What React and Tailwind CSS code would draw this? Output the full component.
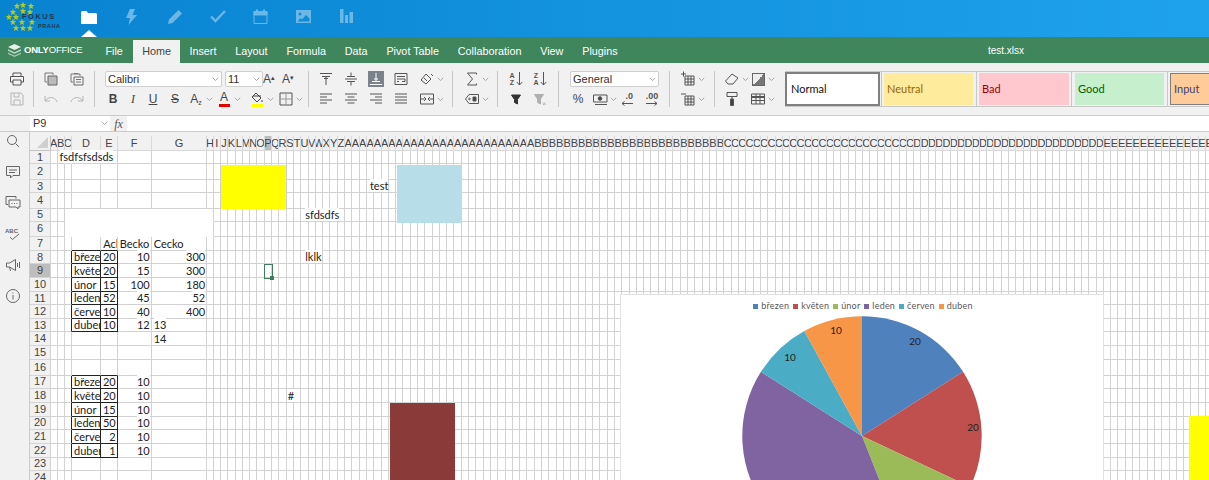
import React from "react";

const colName = (i) => {
  const a = "ABCDEFGHIJKLMNOPQRSTUVWXYZ";
  return i < 26 ? a[i] : a[Math.floor(i / 26) - 1] + a[i % 26];
};

const colWidths = [6.5, 7.2, 7.3, 29.2, 16.5, 34, 55.5, 6.5];
for (let i = 0; i < 138; i++) colWidths.push(7.3);

const rowLines = [151, 164.4, 180, 193.4, 208.7, 222.3, 236.7, 250.7, 264.4, 278.3, 292, 305.4, 318.8, 332.4, 346, 360, 375.7, 389.4, 403, 416.7, 430.4, 444, 457.7, 471.4, 485];
const rowHeights = rowLines.slice(1).map((y, i) => y - rowLines[i]);

const cells = {
  B1: { t: "fsdfsfsdsds", cls: "pl-[2px]" },
  U5: { t: "sfdsdfs", cls: "pl-[4px]" },
  AD3: { t: "test", cls: "pl-[3px]" },
  E7: { t: "Ack", clip: true, cls: "pl-[2px]" },
  F7: { t: "Becko", cls: "pl-[2px]" },
  G7: { t: "Cecko", cls: "pl-[2px]" },
  U8: { t: "lklk", cls: "pl-[4px]" },
  G13: { t: "13", cls: "pl-[2px]" },
  G14: { t: "14", cls: "pl-[2px]" },
  S18: { t: "#", cls: "pl-[1px]" },
};
const fill = (row, d, e, f, g) => {
  cells["D" + row] = { t: d, clip: true, cls: "pl-[2px]" };
  cells["E" + row] = { t: e, clip: true, cls: "text-right pr-[1px]" };
  cells["F" + row] = { t: f, cls: "text-right pr-[1px]" };
  if (g) cells["G" + row] = { t: g, cls: "text-right pr-[1px]" };
};
fill(8, "březen", "20", "10", "300");
fill(9, "květen", "20", "15", "300");
fill(10, "únor", "15", "100", "180");
fill(11, "leden", "52", "45", "52");
fill(12, "červen", "10", "40", "400");
fill(13, "duben", "10", "12");
fill(17, "březen", "20", "10");
fill(18, "květen", "20", "10");
fill(19, "únor", "15", "10");
fill(20, "leden", "50", "10");
fill(21, "červen", "2", "10");
fill(22, "duben", "1", "10");

const inTable = (r) => (r >= 8 && r <= 13) || (r >= 17 && r <= 22);

function cellBorders(c, r) {
  const name = colName(c);
  const blank = r >= 5 && r <= 6 && c >= 2 && c <= 7;
  let right = "border-r-[#d2d2d2]";
  let bottom = "border-b-[#d2d2d2]";
  if (r === 1 && c >= 1 && c <= 3) right = "border-r-transparent";
  if (blank && c < 7) right = "border-r-transparent";
  if (blank) bottom = "border-b-transparent";
  if (inTable(r) && (name === "C" || name === "D" || name === "E")) right = "border-r-[#222]";
  if ((inTable(r) || inTable(r + 1)) && (name === "D" || name === "E")) bottom = "border-b-[#222]";
  return right + " " + bottom;
}

function Sheet() {
  const rows = rowHeights.map((_, i) => i + 1);
  return (
    <div
      className="grid font-['Lato',sans-serif] text-[11px] leading-[13px] text-[#222]"
      style={{
        gridTemplateColumns: "21px " + colWidths.map((w) => w + "px").join(" "),
        gridTemplateRows: "15px " + rowHeights.map((h) => h + "px").join(" "),
      }}
    >
      <div className="bg-[#f1f1f1] border-r border-b border-[#c4c4c4] flex items-end justify-end pr-[2px] pb-[2px]">
        <svg width="11" height="11" viewBox="0 0 11 11"><path d="M11 0v11H0z" fill="#cfcfcf" /></svg>
      </div>
      {colWidths.map((_, c) => {
        const name = colName(c);
        return (
          <div
            key={name}
            className={
              "border-r border-b border-[#d9d9d9] overflow-hidden flex items-center justify-center font-['Liberation_Sans',sans-serif] text-[11px] text-[#444] " +
              (name === "P" ? "bg-[#bdbdbd]" : "bg-[#f1f1f1]")
            }
          >
            {name[0]}
          </div>
        );
      })}
      {rows.map((r) => (
        <React.Fragment key={r}>
          <div
            className={
              "border-r border-b border-[#d4d4d4] flex items-center justify-center font-['Liberation_Sans',sans-serif] text-[11px] text-[#444] " +
              (r === 9 ? "bg-[#bdbdbd]" : "bg-[#f1f1f1]")
            }
          >
            {r}
          </div>
          {colWidths.map((_, c) => {
            const id = colName(c) + r;
            const cell = cells[id];
            return (
              <div
                key={id}
                className={
                  "border-r border-b whitespace-nowrap flex flex-col justify-end min-w-0 " +
                  cellBorders(c, r) +
                  (cell && cell.clip ? " overflow-hidden" : "")
                }
              >
                {cell && (
                  <div className={"relative z-[1] " + cell.cls}>
                    <span className="bg-white">{cell.t}</span>
                  </div>
                )}
              </div>
            );
          })}
        </React.Fragment>
      ))}
    </div>
  );
}

const legend = [
  ["březen", "bg-[#4f81bd]"],
  ["květen", "bg-[#c0504d]"],
  ["únor", "bg-[#9bbb59]"],
  ["leden", "bg-[#8064a2]"],
  ["červen", "bg-[#4bacc6]"],
  ["duben", "bg-[#f79646]"],
];

const slices = [
  [20, "#4f81bd"],
  [20, "#c0504d"],
  [15, "#9bbb59"],
  [50, "#8064a2"],
  [10, "#4bacc6"],
  [10, "#f79646"],
];

function Pie() {
  const cx = 120, cy = 120, rad = 119.7;
  let acc = 0;
  return (
    <svg width="240" height="240" viewBox="0 0 240 240">
      {slices.map(([v, color]) => {
        const a0 = (acc / 125) * Math.PI * 2;
        acc += v;
        const a1 = (acc / 125) * Math.PI * 2;
        const large = a1 - a0 > Math.PI ? 1 : 0;
        const d = `M${cx} ${cy}L${cx + rad * Math.sin(a0)} ${cy - rad * Math.cos(a0)}A${rad} ${rad} 0 ${large} 1 ${cx + rad * Math.sin(a1)} ${cy - rad * Math.cos(a1)}Z`;
        return <path key={color} d={d} fill={color} />;
      })}
      <g fontFamily="Lato, sans-serif" fontSize="10" fill="#222" textAnchor="middle">
        <text x="173" y="29">20</text>
        <text x="231" y="115">20</text>
        <text x="48" y="45">10</text>
        <text x="94" y="18">10</text>
      </g>
    </svg>
  );
}

function Chart() {
  return (
    <div className="absolute left-[590px] top-[158px] w-[484px] h-[400px] bg-white border border-[#e2e2e2]">
      <div className="flex justify-center gap-[4px] pt-[1px] pl-[2px] h-[21px] font-['Lato',sans-serif] text-[9px] leading-[12px] tracking-[0.2px] text-[#595959]">
        {legend.map(([name, color]) => (
          <div key={name} className="flex items-center gap-[3px]">
            <span className={"w-[5px] h-[5px] " + color}></span>
            <span>{name}</span>
          </div>
        ))}
      </div>
      <div className="ml-[121px]"><Pie /></div>
    </div>
  );
}

const ic = {
  print: <><path d="M4 5V2h8v3M4 11H1.5V5.5h13V11H12" /><path d="M4 9h8v5H4z" /></>,
  save: <><path d="M2 2h10l2 2v10H2z" /><path d="M5 2v4h5V2M5 14V9h6v5" /></>,
  copy: <><path d="M2 2h8v2M2 2v9h2" stroke="#777" /><path d="M5 5h9v9H5z" fill="#bbb" stroke="#666" /></>,
  paste: <><path d="M2 3h9v2M2 3v8h2" stroke="#777" /><path d="M5 2.5h4" stroke="#777" /><path d="M5 6h9v8H5z" stroke="#666" /><path d="M7 8.5h5M7 11h5" stroke="#777" /></>,
  undo: <path d="M14 11c-1-4-6-6-10-3L2 10V5M2 10h5" />,
  redo: <path d="M2 11c1-4 6-6 10-3l2 2V5M14 10H9" />,
  vtop: <><path d="M2 2.5h12" /><path d="M4 5.5h8M8 5.5V14M6 7.5h4" /></>,
  vmid: <><path d="M2 8h12M4 5.5h8M4 10.5h8M8 1.5V5M8 11v3.5" /></>,
  vbot: <><path d="M2 13.5h12M4 10.5h8M8 2v8.5M6 8h4" /></>,
  wrap: <><path d="M2 2.5h12v11H2z" /><path d="M4 5.5h8M4 8h8v2.5H9M4 10.5h2" /></>,
  orient: <><path d="M2 9l5-6 5 5-5 5z" /><path d="M5 7l3 3" /><path d="M12 3l2 2" /></>,
  left: <path d="M2 3h12M2 6h7M2 9h12M2 12h7" />,
  center: <path d="M2 3h12M4.5 6h7M2 9h12M4.5 12h7" />,
  right: <path d="M2 3h12M7 6h7M2 9h12M7 12h7" />,
  just: <path d="M2 3h12M2 6h12M2 9h12M2 12h12" />,
  merge: <><path d="M1.5 3h13v10h-13z" /><path d="M1.5 8h4M10.5 8h4M5 6l2 2-2 2M11 6L9 8l2 2" /></>,
  sum: <path d="M12.5 3.5V2h-9l5 6-5 6h9v-1.5" />,
  tag: <><path d="M1.5 8L5 3.5h9.5v9H5z" /><path d="M9 6h3v4H9z" fill="#444" /><circle cx="5.5" cy="8" r=".8" /></>,
  filter: <path d="M3.5 4h9L9.5 8.5V13l-3-1.5v-3z" fill="#333" stroke="#333" />,
  filterx: <><path d="M2.5 3.5h9L8.5 8v5l-3-1.5V8z" fill="#b0b0b0" stroke="#b0b0b0" /><path d="M11 11.5l2.5 2.5M13.5 11.5L11 14" stroke="#b0b0b0" /></>,
  money: <><path d="M1.5 4H15v7H1.5z" /><path d="M3 13.5h12" /><circle cx="8" cy="7.5" r="1.8" fill="#444" /></>,
  cellsAdd: <><path d="M5 5h9v9H5zM8 5v9M11 5v9M5 8h9M5 11h9" /><path d="M1 3h5M3.5.5v5" /></>,
  cellsDel: <><path d="M5 5h9v9H5zM8 5v9M11 5v9M5 8h9M5 11h9" /><path d="M1 3h5" /></>,
  eraser: <><path d="M1.5 10L8 3l6 4-5 6H4z" /></>,
  painter: <><path d="M3 1.5h10v4H3z" /><path d="M8 5.5V8" /><path d="M6.5 8h3v6.5h-3z" fill="#444" /></>,
  table: <><path d="M1.5 3h13v10h-13z" /><path d="M1.5 6h13" strokeWidth="2" /><path d="M1.5 9.5h13M6 3v10M10 3v10" /></>,
  border: <><path d="M2 2h12v12H2z" /><path d="M8 2v12M2 8h12" stroke="#999" /></>,
};

function Ic({ name, cls = "text-[#555]" }) {
  return (
    <svg width="16" height="16" viewBox="0 0 16 16" fill="none" stroke="currentColor" strokeWidth="1" className={cls}>
      {ic[name]}
    </svg>
  );
}

function Chev() {
  return (
    <svg width="7" height="5" viewBox="0 0 7 5" fill="none" stroke="#a8a8a8" className="ml-[2px]">
      <path d="M.8 .8L3.5 3.6 6.2 .8" />
    </svg>
  );
}

function Cell({ w, children, cls = "" }) {
  return <div className={"h-4 flex items-center justify-center shrink-0 " + w + " " + cls}>{children}</div>;
}

function Combo({ w, text, cls = "" }) {
  return (
    <div className={"h-4 bg-white border border-[#cfcfcf] rounded-[2px] flex items-center justify-between px-[2px] text-[11px] text-[#333] shrink-0 " + w + " " + cls}>
      <span>{text}</span>
      <Chev />
    </div>
  );
}

function Group({ w, children, cls = "" }) {
  return <div className={"h-9 flex flex-col justify-between shrink-0 border-r border-[#c8c8c8] " + w + " " + cls}>{children}</div>;
}

const Line = ({ children, cls = "" }) => <div className={"flex items-center " + cls}>{children}</div>;

function Letter({ children, cls = "" }) {
  return <span className={"text-[12px] leading-4 text-[#444] " + cls}>{children}</span>;
}

function StyleBox({ w, text, cls }) {
  return (
    <div className={"h-[32px] shrink-0 flex items-center pl-[3px] pt-[1px] font-['Lato',sans-serif] text-[11px] " + w + " " + cls}>
      {text}
    </div>
  );
}

function SortIcon({ top, bottom }) {
  return (
    <div className="flex items-center gap-[1px] text-[#555]">
      <span className="text-[7px] leading-[7px] font-bold text-center">{top}<br />{bottom}</span>
      <svg width="7" height="14" viewBox="0 0 7 14" fill="none" stroke="currentColor"><path d="M3.5 0v13M.8 10l2.7 3 2.7-3" /></svg>
    </div>
  );
}

function DecIcon({ text, left }) {
  return (
    <div className="flex flex-col items-end text-[#555]">
      <span className="text-[9px] leading-[9px] font-bold">{text}</span>
      <svg width="12" height="5" viewBox="0 0 12 5" fill="none" stroke="currentColor">
        <path d={left ? "M12 2.5H1M3.5 .5L1 2.5l2.5 2" : "M0 2.5h11M8.5 .5L11 2.5l-2.5 2"} />
      </svg>
    </div>
  );
}

function Toolbar() {
  return (
    <div className="h-[52px] bg-[#f1f1f1] flex items-start pt-2 overflow-hidden">
      <Group w="w-[34px]" cls="items-center">
        <Ic name="print" />
        <Ic name="save" cls="text-[#b5b5b5]" />
      </Group>
      <Group w="w-[61px]" cls="pl-[4px]">
        <Line>
          <Cell w="w-[26px]"><Ic name="copy" /></Cell>
          <Cell w="w-[26px]"><Ic name="paste" /></Cell>
        </Line>
        <Line>
          <Cell w="w-[26px]"><Ic name="undo" cls="text-[#b5b5b5]" /></Cell>
          <Cell w="w-[26px]"><Ic name="redo" cls="text-[#b5b5b5]" /></Cell>
        </Line>
      </Group>
      <Group w="w-[214px]" cls="pl-[10px]">
        <Line>
          <Combo w="w-[117px]" text="Calibri" />
          <Combo w="w-[38px]" text="11" cls="ml-[3px]" />
          <Cell w="w-[16px]" cls="ml-[-2px]"><Letter>A<sup className="text-[7px]">▴</sup></Letter></Cell>
          <Cell w="w-[16px]" cls="ml-[3px]"><Letter cls="text-[11px]">A<sup className="text-[7px]">▾</sup></Letter></Cell>
        </Line>
        <Line>
          <Cell w="w-[16px]"><Letter cls="font-bold">B</Letter></Cell>
          <Cell w="w-[16px]" cls="ml-[4px]"><Letter cls="italic font-['Liberation_Serif',serif]">I</Letter></Cell>
          <Cell w="w-[16px]" cls="ml-[4px]"><Letter cls="underline">U</Letter></Cell>
          <Cell w="w-[16px]" cls="ml-[6px]"><Letter cls="line-through">S</Letter></Cell>
          <Cell w="w-[16px]" cls="ml-[5px]"><Letter>A<sub className="text-[7px]">z</sub></Letter></Cell>
          <Chev />
          <Cell w="w-[16px]" cls="ml-[3px] flex-col"><Letter cls="leading-[13px]">A</Letter><span className="w-[11px] h-[3px] bg-[#e60000]"></span></Cell>
          <Chev />
          <Cell w="w-[16px]" cls="ml-[8px] flex-col">
            <svg width="14" height="12" viewBox="0 0 14 12" fill="none" stroke="#444"><path d="M6 1l5 5-4 4-5-5zM3 4h8M12 8v2" /></svg>
            <span className="w-[11px] h-[3px] bg-[#ffff00]"></span>
          </Cell>
          <Chev />
          <Cell w="w-[16px]" cls="ml-[4px]"><Ic name="border" /></Cell>
          <Chev />
        </Line>
      </Group>
      <Group w="w-[144px]" cls="pl-[9px]">
        <Line>
          <Cell w="w-[16px]"><Ic name="vtop" /></Cell>
          <Cell w="w-[16px]" cls="ml-[9px]"><Ic name="vmid" /></Cell>
          <div className="w-4 h-4 ml-[9px] bg-[#7a828c] flex items-center justify-center"><Ic name="vbot" cls="text-white" /></div>
          <Cell w="w-[16px]" cls="ml-[9px]"><Ic name="wrap" /></Cell>
          <Cell w="w-[16px]" cls="ml-[10px]"><Ic name="orient" /></Cell>
          <Chev />
        </Line>
        <Line>
          <Cell w="w-[16px]"><Ic name="left" /></Cell>
          <Cell w="w-[16px]" cls="ml-[9px]"><Ic name="center" /></Cell>
          <Cell w="w-[16px]" cls="ml-[9px]"><Ic name="right" /></Cell>
          <Cell w="w-[16px]" cls="ml-[9px]"><Ic name="just" /></Cell>
          <Cell w="w-[16px]" cls="ml-[10px]"><Ic name="merge" /></Cell>
          <Chev />
        </Line>
      </Group>
      <Group w="w-[45px]" cls="pl-[11px]">
        <Line><Cell w="w-[16px]"><Ic name="sum" /></Cell><Chev /></Line>
        <Line><Cell w="w-[16px]"><Ic name="tag" /></Cell><Chev /></Line>
      </Group>
      <Group w="w-[61px]" cls="pl-[9px]">
        <Line>
          <Cell w="w-[18px]"><SortIcon top="A" bottom="Z" /></Cell>
          <Cell w="w-[18px]" cls="ml-[6px]"><SortIcon top="Z" bottom="A" /></Cell>
        </Line>
        <Line>
          <Cell w="w-[18px]"><Ic name="filter" /></Cell>
          <Cell w="w-[18px]" cls="ml-[6px]"><Ic name="filterx" cls="text-[#aaa]" /></Cell>
        </Line>
      </Group>
      <Group w="w-[111px]" cls="pl-[11px]">
        <Line><Combo w="w-[89px]" text="General" /></Line>
        <Line>
          <Cell w="w-[16px]"><span className="text-[12px] text-[#444]">%</span></Cell>
          <Cell w="w-[16px]" cls="ml-[6px]"><Ic name="money" /></Cell>
          <Chev />
          <Cell w="w-[18px]" cls="ml-[1px]"><DecIcon text=".0" left /></Cell>
          <Cell w="w-[18px]" cls="ml-[7px]"><DecIcon text=".00" /></Cell>
        </Line>
      </Group>
      <Group w="w-[45px]" cls="pl-[10px]">
        <Line><Cell w="w-[16px]"><Ic name="cellsAdd" /></Cell><Chev /></Line>
        <Line><Cell w="w-[16px]"><Ic name="cellsDel" /></Cell><Chev /></Line>
      </Group>
      <div className="h-9 w-[70px] shrink-0 flex flex-col justify-between pl-[9px]">
        <Line>
          <Cell w="w-[16px]"><Ic name="eraser" /></Cell><Chev />
          <Cell w="w-[16px]" cls="ml-[1px]"><span className="w-[13px] h-[13px] border border-[#666] bg-[linear-gradient(135deg,#eee_50%,#777_50%)]"></span></Cell><Chev />
        </Line>
        <Line>
          <Cell w="w-[16px]"><Ic name="painter" /></Cell>
          <Cell w="w-[16px]" cls="ml-[10px]"><Ic name="table" /></Cell><Chev />
        </Line>
      </div>
      <div className="h-[36px] flex items-center border-y border-[#c8c8c8]">
        <StyleBox w="w-[95px]" text="Normal" cls="bg-white border-2 border-[#808080] text-[#111] h-[34px] pl-[4px] text-[11.5px]" />
        <div className="w-px h-full bg-[#c8c8c8] ml-[1px]"></div>
        <StyleBox w="w-[89px]" text="Neutral" cls="bg-[#ffeb9c] text-[#9c6500] ml-[2px]" />
        <div className="w-px h-full bg-[#c8c8c8] ml-[3px]"></div>
        <StyleBox w="w-[90px]" text="Bad" cls="bg-[#ffc7ce] text-[#9c0006] ml-[2px]" />
        <div className="w-px h-full bg-[#c8c8c8] ml-[2px]"></div>
        <StyleBox w="w-[89px]" text="Good" cls="bg-[#c6efce] text-[#006100] ml-[3px]" />
        <div className="w-px h-full bg-[#c8c8c8] ml-[3px]"></div>
        <StyleBox w="w-[60px]" text="Input" cls="bg-[#ffcc99] text-[#3f3f76] border border-[#7f7f7f] ml-[2px]" />
      </div>
    </div>
  );
}

const tabs = ["File", "Home", "Insert", "Layout", "Formula", "Data", "Pivot Table", "Collaboration", "View", "Plugins"];

function Star({ x, y }) {
  return <path transform={`translate(${x} ${y})`} d="M0-3.2L.9-1 3.2-.9 1.4.6 2 3 0 1.7-2 3-1.4.6-3.2-.9-.9-1z" fill="#b4cc14" />;
}

function Logo() {
  const stars = [[17,6],[23,5],[31,6],[13,12],[23,11],[30,12],[9,17],[16,17],[13,22],[22,22],[32,22],[16,28],[23,28],[30,28]];
  return (
    <div className="relative w-[67px] h-[37px] shrink-0">
      <svg width="40" height="37" viewBox="0 0 40 37">
        {stars.map(([x, y]) => <Star key={x + "-" + y} x={x} y={y} />)}
      </svg>
      <span className="absolute left-[22px] top-[12px] text-[7.5px] leading-[9px] font-bold tracking-[1.5px] text-[#23364f]">FOKUS</span>
      <span className="absolute left-[38px] top-[23px] text-[5.5px] leading-[6px] font-bold tracking-[0.6px] text-[#23364f]">PRAHA</span>
    </div>
  );
}

function TopIcons() {
  const c = "text-[#6bb8e6]";
  return (
    <div className="flex items-center">
      <div className="relative w-[43px] h-[37px] flex justify-center pt-[11px]">
        <svg width="16" height="13" viewBox="0 0 16 13" fill="#fff"><path d="M0 1.5A1.5 1.5 0 0 1 1.5 0h4L7 2h7.5A1.5 1.5 0 0 1 16 3.5V13H0z" /></svg>
        <span className="absolute bottom-0 left-[13.5px] w-0 h-0 border-x-[8px] border-x-transparent border-b-[7px] border-b-white"></span>
      </div>
      <div className="w-[43px] h-[37px] flex justify-center pt-[9px]">
        <svg width="11" height="16" viewBox="0 0 11 16" fill="currentColor" className={c}><path d="M4 0L0 9h4l-1.5 7L11 6H6.5L9 0z" /></svg>
      </div>
      <div className="w-[43px] h-[37px] flex justify-center pt-[10px]">
        <svg width="14" height="14" viewBox="0 0 14 14" fill="currentColor" className={c}><path d="M10.5 0L14 3.5 4.5 13 0 14l1-4.5z" /></svg>
      </div>
      <div className="w-[43px] h-[37px] flex justify-center pt-[10px]">
        <svg width="16" height="13" viewBox="0 0 16 13" fill="none" stroke="currentColor" strokeWidth="2.4" className={c}><path d="M1 6.5L5.5 11 15 1" /></svg>
      </div>
      <div className="w-[43px] h-[37px] flex justify-center pt-[9px]">
        <svg width="15" height="15" viewBox="0 0 15 15" fill="none" stroke="currentColor" className={c}><path d="M1 2.5h13v12H1z" /><path d="M1 2.5h13V6H1z" fill="currentColor" /><path d="M4 .5v3M11 .5v3" strokeWidth="2" /></svg>
      </div>
      <div className="w-[43px] h-[37px] flex justify-center pt-[10px]">
        <svg width="15" height="13" viewBox="0 0 15 13" fill="currentColor" className={c}><path fillRule="evenodd" d="M0 0h15v13H0zM4 2.5a1.5 1.5 0 1 0 0 3 1.5 1.5 0 0 0 0-3zM1.5 11.5h12v-3L10 5 6 9.5 4.5 8z" /></svg>
      </div>
      <div className="w-[43px] h-[37px] flex justify-center pt-[9px]">
        <svg width="14" height="14" viewBox="0 0 14 14" fill="currentColor" className={c}><path d="M0 0h3.5v14H0zM5 6h3v8H5zM9.5 3H13v11H9.5z" /></svg>
      </div>
    </div>
  );
}

const sideIcons = [
  <><circle cx="7" cy="7" r="4.5" /><path d="M10.5 10.5L14 14" /></>,
  <><path d="M1.5 2.5h13v9H8l-2.5 2.5v-2.5h-4z" /><path d="M4 6h8M4 8.5h6" /></>,
  <><path d="M1 1.5h10v2M1 1.5v8h2" /><path d="M4 5h11v7h-2v2l-2-2H4z" /><path d="M6.5 8.5h1M9 8.5h1M11.5 8.5h1" /></>,
  <><text x="0" y="7" fontSize="6" fontWeight="700" fill="currentColor" stroke="none" fontFamily="Liberation Sans, sans-serif">ABC</text><path d="M5 11l2.5 2.5L14 8" /></>,
  <><path d="M1.5 6h3l6-3.5v11l-6-3.5h-3zM4.5 10l1 4" /><path d="M12.5 6v4M14.5 5v6" /></>,
  <><circle cx="8" cy="8" r="6.5" /><path d="M8 7v4.5M8 4.5v1" /></>,
];

function Sidebar() {
  return (
    <div className="w-[30px] shrink-0 bg-[#f1f1f1] border-r border-[#cbcbcb] flex flex-col items-center gap-[15px] pt-[1px] pr-[4px] text-[#666]">
      {sideIcons.map((icon, i) => (
        <svg key={i} width="16" height="16" viewBox="0 0 16 16" fill="none" stroke="currentColor" className="shrink-0">{icon}</svg>
      ))}
    </div>
  );
}

export default function App() {
  return (
    <div className="w-[1209px] h-[480px] overflow-hidden flex flex-col bg-white font-['Liberation_Sans',sans-serif]">
      <div className="h-[37px] shrink-0 flex bg-[linear-gradient(90deg,#0883d0,#1fa2ec)]">
        <Logo />
        <TopIcons />
      </div>
      <div className="h-[26px] shrink-0 bg-[#40865c] flex items-end text-white text-[10.8px]">
        <div className="w-[96px] h-full shrink-0 flex items-center pl-[8px] gap-[3px]">
          <svg width="13" height="13" viewBox="0 0 13 13" fill="#e8f0ea"><path d="M6.5 0L13 3 6.5 6 0 3z" /><path d="M0 5.2L6.5 8.2 13 5.2v1.6L6.5 9.8 0 6.8z" opacity=".8" /><path d="M0 8.4l6.5 3 6.5-3V10L6.5 13 0 10z" opacity=".6" /></svg>
          <span className="text-[9.5px] font-bold tracking-[-0.2px] whitespace-nowrap">ONLY<span className="font-normal">OFFICE</span></span>
        </div>
        {tabs.map((t) =>
          t === "Home" ? (
            <div key={t} className="h-[23px] px-[9px] ml-[1px] bg-[#f1f1f1] text-[#444] flex items-center">{t}</div>
          ) : (
            <div key={t} className="h-[23px] px-[9.4px] flex items-center whitespace-nowrap">{t}</div>
          )
        )}
        <div className="ml-auto mr-[185px] h-full flex items-center text-[10px]">test.xlsx</div>
      </div>
      <Toolbar />
      <div className="h-[17px] shrink-0 flex bg-white border-y border-[#cbcbcb]">
        <div className="w-[30px] bg-[#f1f1f1]"></div>
        <div className="w-[80px] flex items-center justify-between pl-[3px] pr-[2px] text-[11px] text-[#333]">P9<Chev /></div>
        <div className="w-[17px] bg-[#f1f1f1] flex items-center justify-center font-['Liberation_Serif',serif] italic text-[12px] text-[#555]">fx</div>
      </div>
      <div className="flex flex-1 min-h-0 bg-[#f1f1f1]">
        <Sidebar />
        <div className="flex-1 min-w-0 pt-[4px] overflow-hidden">
          <div className="relative h-[350px] bg-white overflow-hidden">
            <Sheet />
            <div className="absolute left-[190.5px] top-[28.5px] w-[65.5px] h-[44.5px] bg-[#ffff00]"></div>
            <div className="absolute left-[366.5px] top-[28.5px] w-[65.5px] h-[58px] bg-[#b7dde8]"></div>
            <div className="absolute left-[359.5px] top-[266.5px] w-[65.5px] h-[90px] bg-[#8b3a3a]"></div>
            <div className="absolute left-[1159px] top-[280px] w-[30px] h-[80px] bg-[#ffff00]"></div>
            <div className="absolute left-[234px] top-[128px] w-[8.5px] h-[15px] border border-[#3e7c5b]">
              <span className="absolute right-[-2px] bottom-[-2px] w-[4px] h-[4px] bg-[#3e7c5b]"></span>
            </div>
            <Chart />
          </div>
        </div>
      </div>
    </div>
  );
}
